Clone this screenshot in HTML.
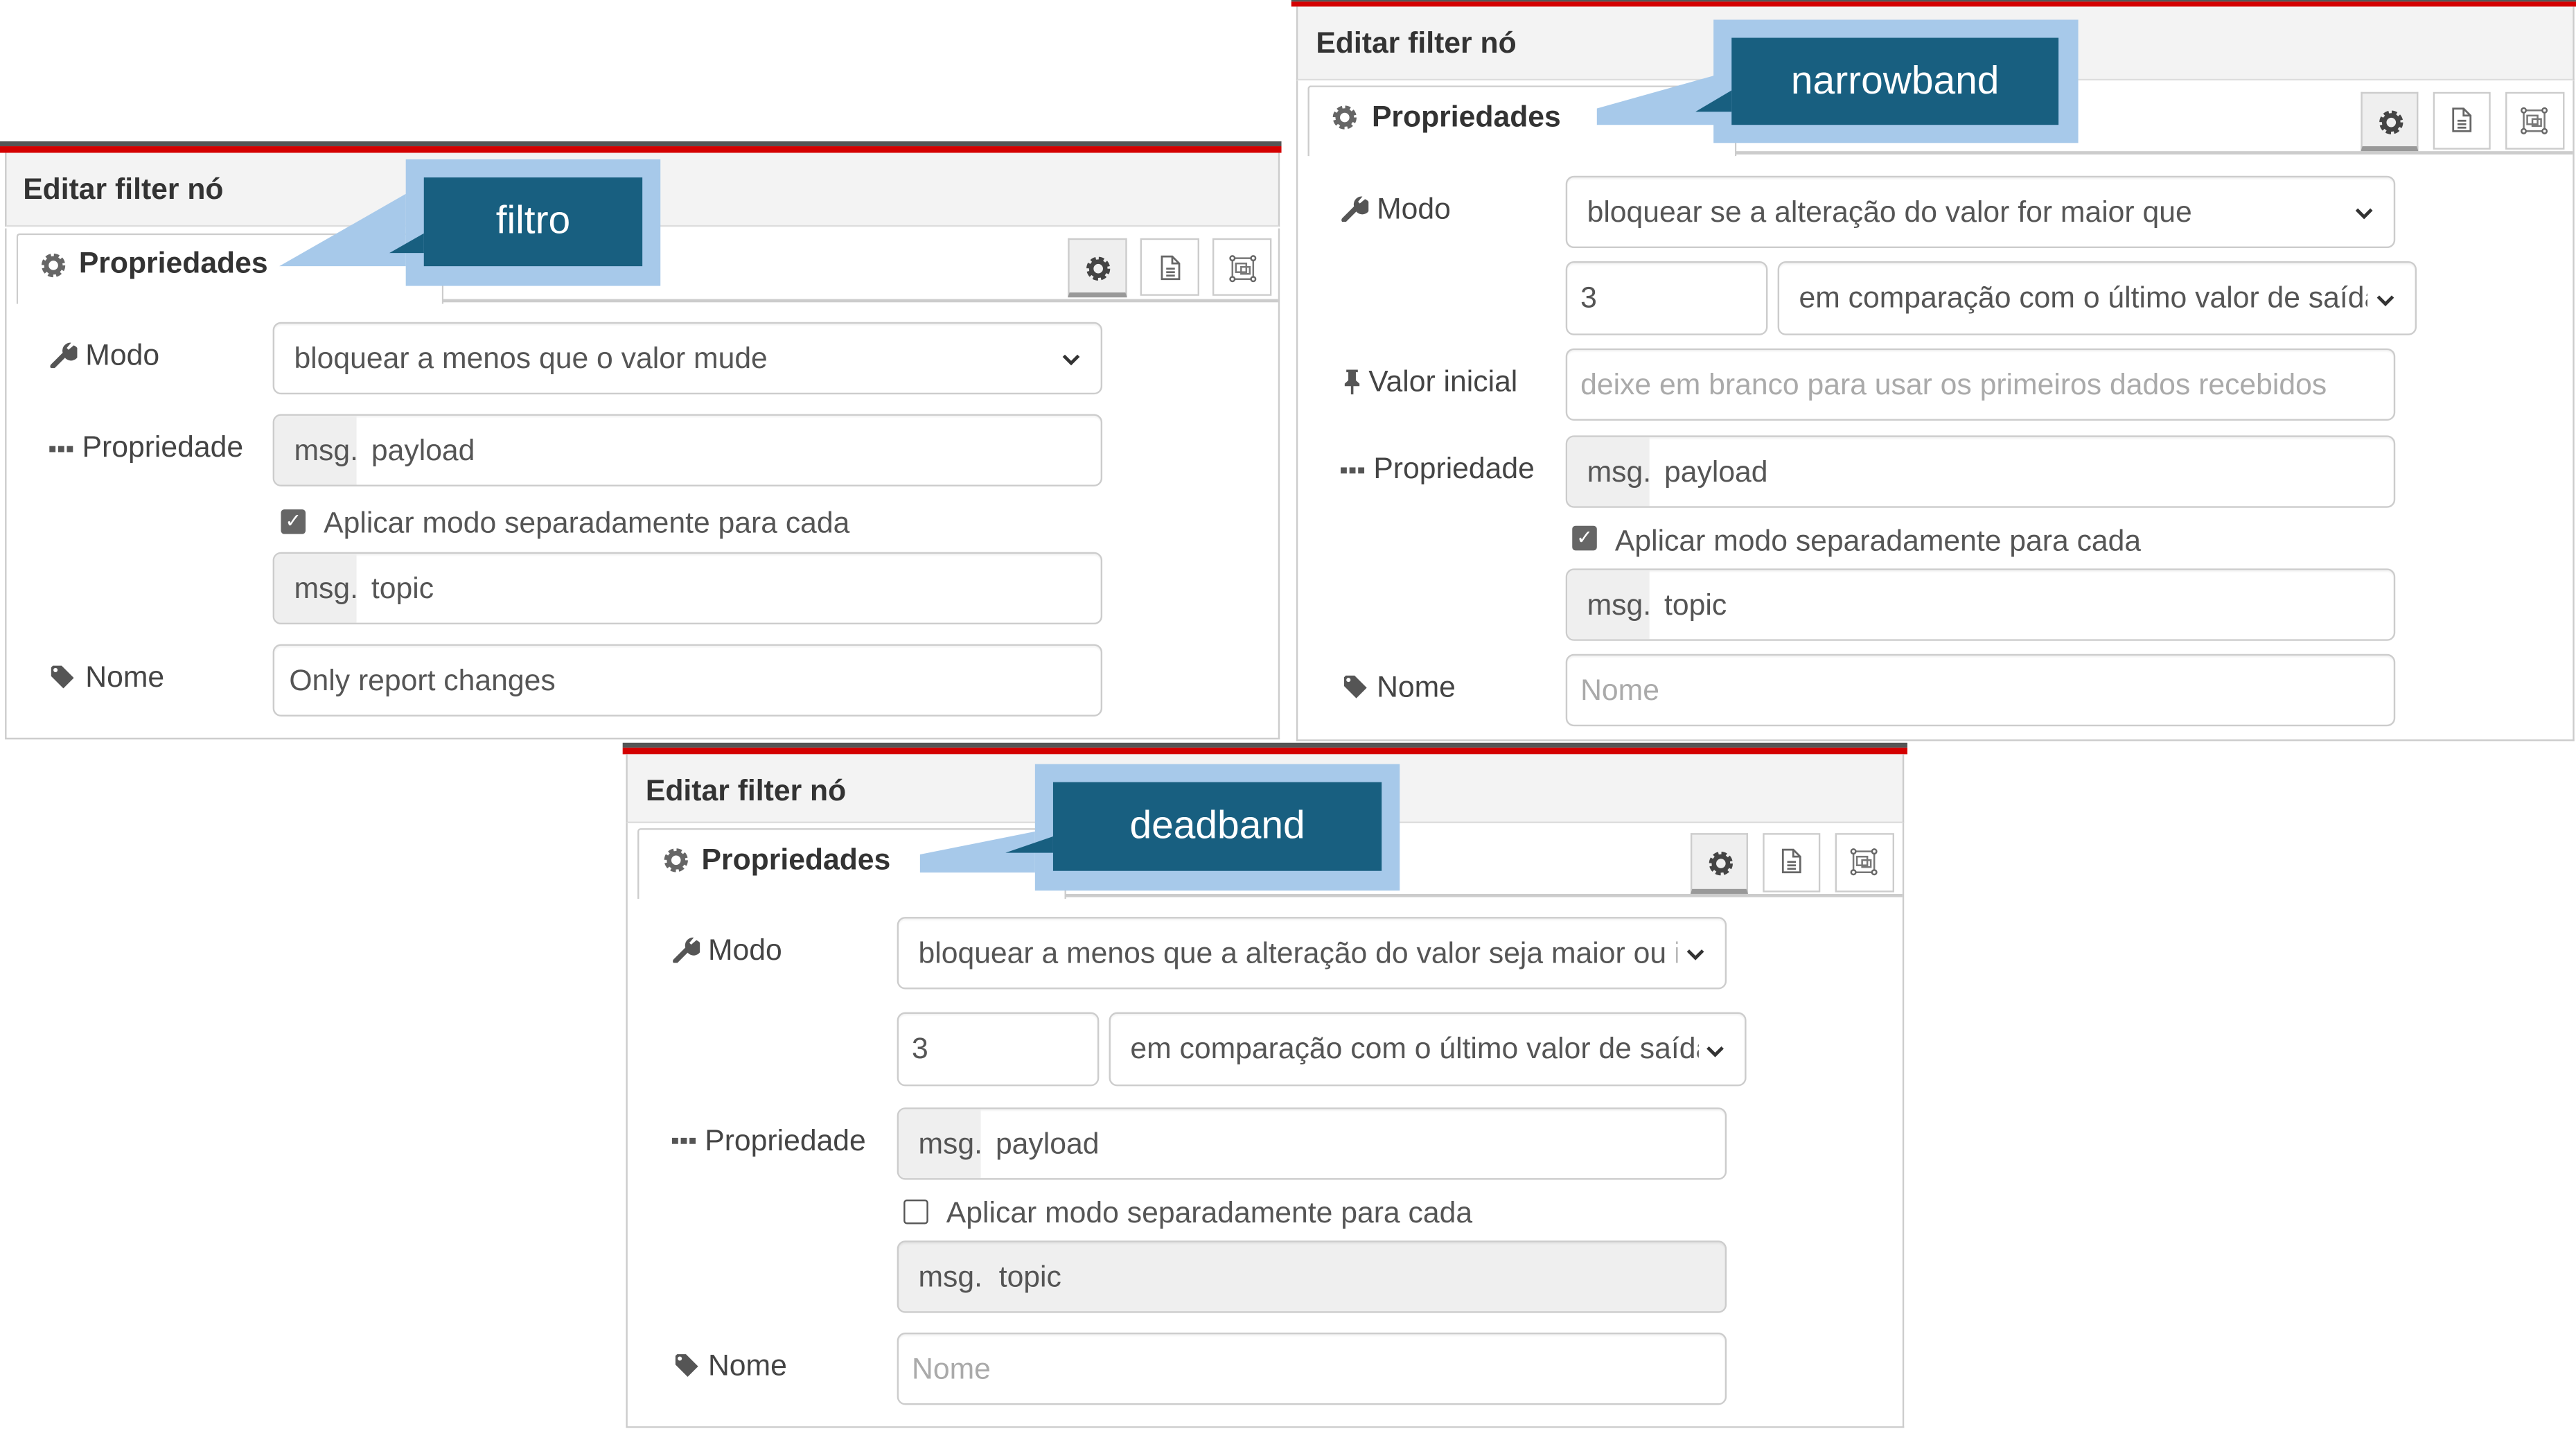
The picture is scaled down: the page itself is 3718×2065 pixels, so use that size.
<!DOCTYPE html>
<html><head><meta charset="utf-8"><style>
html,body{margin:0;padding:0;background:#fff;overflow:hidden}
body{width:3718px;height:2065px;position:relative}
#w{position:absolute;left:0;top:0;width:1568px;height:871px;transform:scale(2.3712);transform-origin:0 0;font-family:"Liberation Sans",sans-serif}
.a{position:absolute}
.dk{background:#555}.rd{background:#d40000}
.hd{background:#f3f3f3;border-bottom:1px solid #ddd}
.tt{font-weight:bold;font-size:18px;color:#333;white-space:nowrap}
.tab{background:#fff;border:1px solid #ccc;border-bottom:none;border-radius:2px 2px 0 0}
.tl{border-bottom:2px solid #ccc}
.btn{border:1px solid #ccc;background:#fff;box-sizing:border-box}
.btn.on{background:#efefef;border-bottom:3px solid #999}
.body{background:#fff;border:1px solid #ccc;border-top:none;box-sizing:border-box}
.in{box-sizing:border-box;border:1px solid #ccc;border-radius:5px;background:#fff;font-size:18px;color:#555;white-space:nowrap;overflow:hidden;padding-left:12px;box-shadow:inset 0 1px 1px rgba(0,0,0,.05)}
.ph{color:#aaa}
.msg{position:absolute;left:0;top:0;bottom:0;width:50px;background:#efefef;padding-left:12px;box-sizing:border-box;color:#555}
.lb{font-size:18px;color:#444;white-space:nowrap}
.sel .t{display:block;overflow:hidden;white-space:nowrap}
.sel svg{position:absolute;right:12px;top:18px}
.cb{width:15px;height:15px;border-radius:2px;box-sizing:border-box}
.cbon{background:#666;color:#fff;font-size:12px;line-height:15px;text-align:center}
.cboff{border:1.5px solid #555;background:#fff}
.cl{background:#a7c9ea}
.cd{background:#185f80;color:#fff;font-size:24px;text-align:center}
</style></head><body><div id="w">

<svg width="0" height="0" style="position:absolute"><defs>
<g id="gear"><circle cx="8" cy="8" r="5.2" fill="none" stroke="#666" stroke-width="3.2" stroke-dasharray="2.6 1.5"/><circle cx="8" cy="8" r="4" fill="none" stroke="#666" stroke-width="2.6"/></g>
<g id="gear2"><circle cx="8" cy="8" r="5.2" fill="none" stroke="#444" stroke-width="3.2" stroke-dasharray="2.6 1.5"/><circle cx="8" cy="8" r="4" fill="none" stroke="#444" stroke-width="2.6"/></g>
<g id="doc"><path d="M4 2h6l4 4v9H4z M10 2v4h4 M6.5 9h5 M6.5 11h5 M6.5 13h5" fill="none" stroke="#666" stroke-width="1.1"/></g>
<g id="fr"><path d="M3 3h12v12H3z" fill="none" stroke="#777" stroke-width="1"/><rect x="5" y="6" width="6" height="5" fill="none" stroke="#777"/><rect x="8" y="8" width="5" height="4" fill="none" stroke="#777"/><circle cx="3" cy="3" r="1.3" fill="#fff" stroke="#666"/><circle cx="15" cy="3" r="1.3" fill="#fff" stroke="#666"/><circle cx="3" cy="15" r="1.3" fill="#fff" stroke="#666"/><circle cx="15" cy="15" r="1.3" fill="#fff" stroke="#666"/></g>
<g id="wr"><path d="M2 15 L9 8" stroke="#555" stroke-width="3" stroke-linecap="round"/><path d="M8 8 A4.5 4.5 0 1 0 14 3 L11 5.5 L10 4.5 L12.5 1.5 A4.5 4.5 0 0 0 8 8z" fill="#555"/></g>
<g id="dots"><rect x="1" y="7" width="3.5" height="3.5" fill="#555"/><rect x="6" y="7" width="3.5" height="3.5" fill="#555"/><rect x="11" y="7" width="3.5" height="3.5" fill="#555"/></g>
<g id="tag"><path d="M2 3 L2 8 L9 15 L15 9 L8 2 L3 2z" fill="#555"/><circle cx="4.5" cy="4.5" r="1.2" fill="#fff"/></g>
<g id="pin"><path d="M5 2h7v1.5h-1.2v5l2.2 2v1.5H9.3v5H7.8v-5H4v-1.5l2.2-2v-5H5z" fill="#555"/></g>
<path id="chev" d="M1.5 1.5l4.5 4.5 4.5-4.5" fill="none" stroke="#333" stroke-width="2"/>
</defs></svg>

<!-- ============ PANEL 1 ============ -->
<div class="a dk" style="left:0;top:86px;width:780px;height:3px"></div>
<div class="a rd" style="left:0;top:89px;width:780px;height:4px"></div>
<div class="a hd" style="left:3px;top:93px;width:776px;height:45px;border-left:1px solid #ccc;border-right:1px solid #ccc;box-sizing:border-box"></div>
<div class="a tt" style="left:14px;top:105px">Editar filter nó</div>
<div class="a body" style="left:3px;top:139px;width:776px;height:311px"></div>
<div class="a tl" style="left:268px;top:182px;width:510px;height:0"></div>
<div class="a tab" style="left:10px;top:142px;width:258px;height:42px"></div>
<svg class="a" style="left:24px;top:153px" width="17" height="17" viewBox="0 0 16 16"><use href="#gear"/></svg>
<div class="a tt" style="left:48px;top:150px">Propriedades</div>
<div class="a btn on" style="left:650px;top:145px;width:36px;height:36px"><svg style="margin:9px" width="17" height="17" viewBox="0 0 16 16"><use href="#gear2"/></svg></div>
<div class="a btn" style="left:694px;top:145px;width:36px;height:35px"><svg style="margin:8px" width="19" height="19" viewBox="0 0 18 18"><use href="#doc"/></svg></div>
<div class="a btn" style="left:738px;top:145px;width:36px;height:35px"><svg style="margin:8px" width="19" height="19" viewBox="0 0 18 18"><use href="#fr"/></svg></div>

<svg class="a" style="left:30px;top:207px" width="17" height="17" viewBox="0 0 16 16"><use href="#wr"/></svg>
<div class="a lb" style="left:52px;top:206px">Modo</div>
<div class="a in sel" style="left:166px;top:196px;width:505px;height:44px;line-height:42px"><span class="t" style="width:450px">bloquear a menos que o valor mude</span><svg width="12" height="8"><use href="#chev"/></svg></div>

<svg class="a" style="left:29px;top:264px" width="17" height="17" viewBox="0 0 16 16"><use href="#dots"/></svg>
<div class="a lb" style="left:50px;top:262px">Propriedade</div>
<div class="a in" style="left:166px;top:252px;width:505px;height:44px;line-height:42px;padding-left:59px"><span class="msg">msg.</span>payload</div>

<div class="a cb cbon" style="left:171px;top:310px">&#10003;</div>
<div class="a lb" style="left:197px;top:308px;color:#555">Aplicar modo separadamente para cada</div>
<div class="a in" style="left:166px;top:336px;width:505px;height:44px;line-height:42px;padding-left:59px"><span class="msg">msg.</span>topic</div>

<svg class="a" style="left:29px;top:403px" width="17" height="17" viewBox="0 0 16 16"><use href="#tag"/></svg>
<div class="a lb" style="left:52px;top:402px">Nome</div>
<div class="a in" style="left:166px;top:392px;width:505px;height:44px;line-height:42px;padding-left:9px">Only report changes</div>

<!-- callout filtro -->
<svg class="a" style="left:160px;top:90px" width="250" height="90"><polygon points="10,72 87,28 87,72" fill="#a7c9ea"/></svg>
<div class="a cl" style="left:247px;top:97px;width:155px;height:77px"></div>
<svg class="a" style="left:230px;top:90px" width="40" height="80"><polygon points="7,64 28,52 28,64" fill="#185f80"/></svg>
<div class="a cd" style="left:258px;top:108px;width:133px;height:54px;line-height:54px">filtro</div>

<!-- ============ PANEL 2 ============ -->
<div class="a dk" style="left:786px;top:0;width:782px;height:1px"></div>
<div class="a rd" style="left:786px;top:1px;width:782px;height:3px"></div>
<div class="a hd" style="left:789px;top:4px;width:778px;height:45px;border-left:1px solid #ccc;border-right:1px solid #ccc;box-sizing:border-box"></div>
<div class="a tt" style="left:801px;top:16px">Editar filter nó</div>
<div class="a body" style="left:789px;top:49px;width:778px;height:402px"></div>
<div class="a tl" style="left:1055px;top:92px;width:511px;height:0"></div>
<div class="a tab" style="left:796px;top:52px;width:259px;height:42px"></div>
<svg class="a" style="left:810px;top:63px" width="17" height="17" viewBox="0 0 16 16"><use href="#gear"/></svg>
<div class="a tt" style="left:835px;top:61px">Propriedades</div>
<div class="a btn on" style="left:1437px;top:56px;width:35px;height:36px"><svg style="margin:9px" width="17" height="17" viewBox="0 0 16 16"><use href="#gear2"/></svg></div>
<div class="a btn" style="left:1481px;top:56px;width:35px;height:35px"><svg style="margin:7px" width="19" height="19" viewBox="0 0 18 18"><use href="#doc"/></svg></div>
<div class="a btn" style="left:1525px;top:56px;width:36px;height:35px"><svg style="margin:7px" width="19" height="19" viewBox="0 0 18 18"><use href="#fr"/></svg></div>

<svg class="a" style="left:816px;top:118px" width="17" height="17" viewBox="0 0 16 16"><use href="#wr"/></svg>
<div class="a lb" style="left:838px;top:117px">Modo</div>
<div class="a in sel" style="left:953px;top:107px;width:505px;height:44px;line-height:42px"><span class="t" style="width:450px">bloquear se a alteração do valor for maior que</span><svg width="12" height="8"><use href="#chev"/></svg></div>
<div class="a in" style="left:953px;top:159px;width:123px;height:45px;line-height:42px;padding-left:8px">3</div>
<div class="a in sel" style="left:1082px;top:159px;width:389px;height:45px;line-height:42px"><span class="t" style="width:346px">em comparação com o último valor de saída</span><svg width="12" height="8" style="top:19px"><use href="#chev"/></svg></div>

<svg class="a" style="left:814px;top:223px" width="17" height="18" viewBox="0 0 16 18"><use href="#pin"/></svg>
<div class="a lb" style="left:833px;top:222px">Valor inicial</div>
<div class="a in ph" style="left:953px;top:212px;width:505px;height:44px;line-height:42px;padding-left:8px;color:#aaa">deixe em branco para usar os primeiros dados recebidos</div>

<svg class="a" style="left:815px;top:277px" width="17" height="17" viewBox="0 0 16 16"><use href="#dots"/></svg>
<div class="a lb" style="left:836px;top:275px">Propriedade</div>
<div class="a in" style="left:953px;top:265px;width:505px;height:44px;line-height:42px;padding-left:59px"><span class="msg">msg.</span>payload</div>

<div class="a cb cbon" style="left:957px;top:320px">&#10003;</div>
<div class="a lb" style="left:983px;top:319px;color:#555">Aplicar modo separadamente para cada</div>
<div class="a in" style="left:953px;top:346px;width:505px;height:44px;line-height:42px;padding-left:59px"><span class="msg">msg.</span>topic</div>

<svg class="a" style="left:816px;top:409px" width="17" height="17" viewBox="0 0 16 16"><use href="#tag"/></svg>
<div class="a lb" style="left:838px;top:408px">Nome</div>
<div class="a in ph" style="left:953px;top:398px;width:505px;height:44px;line-height:42px;padding-left:8px;color:#aaa">Nome</div>

<!-- callout narrowband -->
<svg class="a" style="left:960px;top:10px" width="110" height="80"><polygon points="12,56 94,33 94,66 12,66" fill="#a7c9ea"/></svg>
<div class="a cl" style="left:1043px;top:12px;width:222px;height:75px"></div>
<svg class="a" style="left:1020px;top:10px" width="40" height="80"><polygon points="12,58 34,45 34,58" fill="#185f80"/></svg>
<div class="a cd" style="left:1054px;top:23px;width:199px;height:53px;line-height:53px">narrowband</div>

<!-- ============ PANEL 3 ============ -->
<div class="a dk" style="left:379px;top:452px;width:782px;height:3px"></div>
<div class="a rd" style="left:379px;top:455px;width:782px;height:4px"></div>
<div class="a hd" style="left:381px;top:459px;width:778px;height:42px;border-left:1px solid #ccc;border-right:1px solid #ccc;box-sizing:border-box"></div>
<div class="a tt" style="left:393px;top:471px">Editar filter nó</div>
<div class="a body" style="left:381px;top:501px;width:778px;height:368px"></div>
<div class="a tl" style="left:647px;top:544px;width:511px;height:0"></div>
<div class="a tab" style="left:388px;top:504px;width:259px;height:42px"></div>
<svg class="a" style="left:403px;top:515px" width="17" height="17" viewBox="0 0 16 16"><use href="#gear"/></svg>
<div class="a tt" style="left:427px;top:513px">Propriedades</div>
<div class="a btn on" style="left:1029px;top:507px;width:35px;height:37px"><svg style="margin:9px" width="17" height="17" viewBox="0 0 16 16"><use href="#gear2"/></svg></div>
<div class="a btn" style="left:1073px;top:507px;width:35px;height:36px"><svg style="margin:7px" width="19" height="19" viewBox="0 0 18 18"><use href="#doc"/></svg></div>
<div class="a btn" style="left:1117px;top:507px;width:36px;height:36px"><svg style="margin:7px" width="19" height="19" viewBox="0 0 18 18"><use href="#fr"/></svg></div>

<svg class="a" style="left:409px;top:569px" width="17" height="17" viewBox="0 0 16 16"><use href="#wr"/></svg>
<div class="a lb" style="left:431px;top:568px">Modo</div>
<div class="a in sel" style="left:546px;top:558px;width:505px;height:44px;line-height:42px"><span class="t" style="width:462px">bloquear a menos que a alteração do valor seja maior ou igual a</span><svg width="12" height="8"><use href="#chev"/></svg></div>
<div class="a in" style="left:546px;top:616px;width:123px;height:45px;line-height:42px;padding-left:8px">3</div>
<div class="a in sel" style="left:675px;top:616px;width:388px;height:45px;line-height:42px"><span class="t" style="width:346px">em comparação com o último valor de saída</span><svg width="12" height="8" style="top:19px"><use href="#chev"/></svg></div>

<svg class="a" style="left:408px;top:685px" width="17" height="17" viewBox="0 0 16 16"><use href="#dots"/></svg>
<div class="a lb" style="left:429px;top:684px">Propriedade</div>
<div class="a in" style="left:546px;top:674px;width:505px;height:44px;line-height:42px;padding-left:59px"><span class="msg">msg.</span>payload</div>

<div class="a cb cboff" style="left:550px;top:730px"></div>
<div class="a lb" style="left:576px;top:728px;color:#555">Aplicar modo separadamente para cada</div>
<div class="a in" style="left:546px;top:755px;width:505px;height:44px;line-height:42px;background:#efefef">msg.&nbsp; topic</div>

<svg class="a" style="left:409px;top:822px" width="17" height="17" viewBox="0 0 16 16"><use href="#tag"/></svg>
<div class="a lb" style="left:431px;top:821px">Nome</div>
<div class="a in ph" style="left:546px;top:811px;width:505px;height:44px;line-height:42px;padding-left:8px;color:#aaa">Nome</div>

<!-- callout deadband -->
<svg class="a" style="left:550px;top:495px" width="90" height="50"><polygon points="10,25 80,11 80,36 10,36" fill="#a7c9ea"/></svg>
<div class="a cl" style="left:630px;top:465px;width:222px;height:77px"></div>
<svg class="a" style="left:600px;top:495px" width="50" height="50"><polygon points="12,24 41,14 41,24" fill="#185f80"/></svg>
<div class="a cd" style="left:641px;top:476px;width:200px;height:54px;line-height:54px">deadband</div>

</div></body></html>
